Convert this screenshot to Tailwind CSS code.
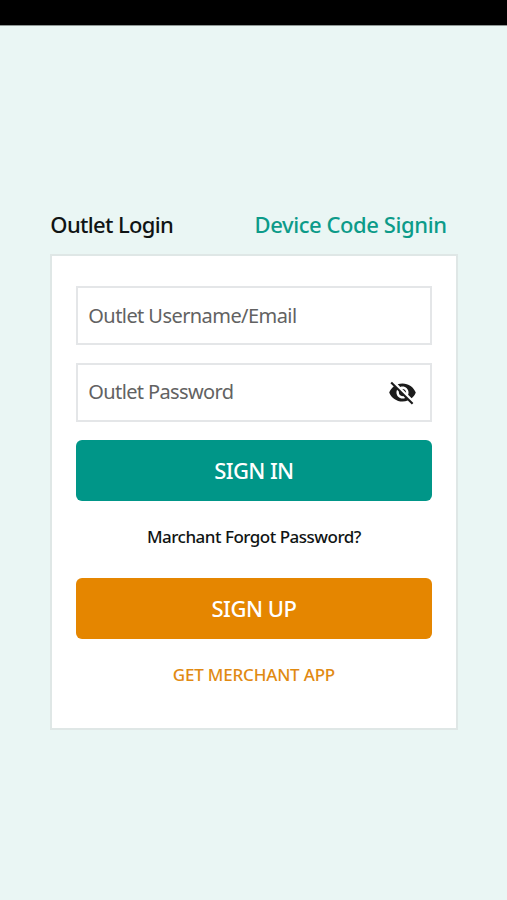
<!DOCTYPE html>
<html lang="en">
<head>
  <meta charset="UTF-8" />
  <meta name="viewport" content="width=device-width, initial-scale=1.0"/>
  <title>Outlet Login</title>
  <script src="https://cdn.jsdelivr.net/npm/@tailwindcss/browser@4"></script>
</head>
<body class="min-h-screen bg-[#eaf6f4] font-['Noto_Sans',sans-serif] text-[#101414]">

  <!-- Status bar -->
  <div class="h-[26px] bg-black border-b border-[#8f9795]"></div>

  <main class="w-[407.25px] ml-[50.3px] pt-[182px]">

    <!-- Tabs -->
    <div class="flex justify-between items-center h-8 mb-3.5 pr-[11px] text-[22px] font-medium whitespace-nowrap">
      <button class="tracking-[-0.65px]">Outlet Login</button>
      <button class="tracking-[-0.42px] text-[#0c9b89]">Device Code Signin</button>
    </div>

    <!-- Login form -->
    <form class="h-[476px] bg-white border-2 border-[#dfe7e6] px-6 pt-[30px]">
      <input type="text" placeholder="Outlet Username/Email"
        class="block w-full h-[59px] mb-[18px] border-2 border-[#e4e6e8] px-[10px] pb-px text-[20px] tracking-[-0.57px] placeholder:text-[#626262]" />

      <div class="flex items-center w-full h-[59px] mb-[18px] border-2 border-[#e4e6e8] pl-[10px] pr-[13px]">
        <input type="password" placeholder="Outlet Password"
          class="flex-1 min-w-0 pb-px text-[20px] tracking-[-0.62px] placeholder:text-[#626262]" />
        <button type="button" aria-label="Show password">
          <svg class="block size-[29px]" viewBox="0 0 24 24" fill="#1c1c1c">
            <path d="M12 7c2.76 0 5 2.24 5 5 0 .65-.13 1.26-.36 1.83l2.92 2.92c1.51-1.26 2.7-2.89 3.43-4.75-1.73-4.39-6-7.5-11-7.5-1.4 0-2.74.25-3.98.7l2.16 2.16C10.74 7.13 11.35 7 12 7zM2 4.27l2.28 2.28.46.46C3.08 8.3 1.78 10.02 1 12c1.73 4.39 6 7.5 11 7.5 1.55 0 3.03-.3 4.38-.84l.42.42L19.73 22 21 20.73 3.27 3 2 4.27zM7.53 9.8l1.55 1.55c-.05.21-.08.43-.08.65 0 1.66 1.34 3 3 3 .22 0 .44-.03.65-.08l1.55 1.55c-.67.33-1.41.53-2.2.53-2.76 0-5-2.24-5-5 0-.79.2-1.53.53-2.2zm4.31-.78l3.15 3.15.02-.16c0-1.66-1.34-3-3-3l-.17.01z"/>
          </svg>
        </button>
      </div>

      <button type="button" class="block w-full h-[61px] rounded-md bg-[#009688] text-white text-[22px] font-medium tracking-[-0.6px]">SIGN IN</button>
      <a href="#" class="flex h-[77px] items-center justify-center pb-[5px] text-[17px] font-medium tracking-[-0.5px]">Marchant Forgot Password?</a>
      <button type="button" class="block w-full h-[61px] rounded-md bg-[#e58600] text-white text-[22px] font-medium tracking-[-0.5px]">SIGN UP</button>
      <a href="#" class="flex h-[77px] items-center justify-center pb-[5px] text-[17px] font-medium tracking-[-0.2px] text-[#e18a12]">GET MERCHANT APP</a>
    </form>
  </main>

</body>
</html>
